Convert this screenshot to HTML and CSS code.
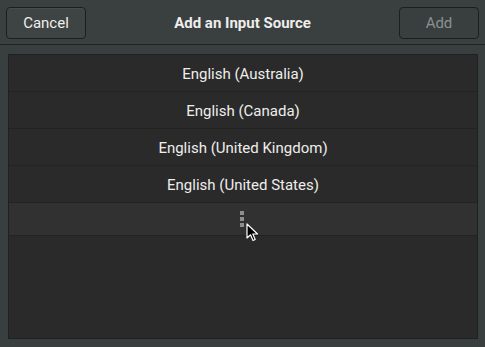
FILE: index.html
```html
<!DOCTYPE html>
<html lang="en">
<head>
    <meta charset="UTF-8">
    <title>Add an Input Source</title>
    <link rel="stylesheet" href="styles.css">
</head>
<body>
    <div class="dialog">
        <!-- Header bar -->
        <header class="headerbar">
            <button class="btn">Cancel</button>
            <h1 class="title">Add an Input Source</h1>
            <button class="btn btn-disabled">Add</button>
        </header>

        <!-- List of sources -->
        <div class="content">
            <ul class="list">
                <li>English (Australia)</li>
                <li>English (Canada)</li>
                <li>English (United Kingdom)</li>
                <li>English (United States)</li>
                <li class="more">
                    <span class="dots"><i></i><i></i><i></i></span>
                    <svg class="cursor" width="14" height="20" viewBox="0 0 14 20">
                        <path d="M1 1 L1 15 L4.5 11.8 L7 17.5 L9.2 16.5 L6.8 11 L11.5 11 Z" fill="#000" stroke="#fff" stroke-width="1.2" stroke-linejoin="round"/>
                    </svg>
                </li>
            </ul>
        </div>
    </div>
</body>
</html>
```

FILE: styles.css
```css
body {
    margin: 0;
    background-color: #393f3f;
    font-family: Roboto, "Noto Sans", sans-serif;
    color: #eeeeec;
}
.dialog {
    width: 485px;
    height: 347px;
    display: flex;
    flex-direction: column;
    background-color: #393f3f;
}
.headerbar {
    height: 44px;
    border-bottom: 1px solid #1f2323;
    background-color: #3a3f3f;
    display: flex;
    align-items: center;
    justify-content: space-between;
    padding: 0 6px;
    box-sizing: content-box;
}
.btn {
    width: 80px;
    height: 32px;
    background-color: #3e4443;
    border: 1px solid #1c1f1f;
    border-radius: 4px;
    color: #eeeeec;
    font-family: Roboto, "Noto Sans", sans-serif;
    font-size: 15px;
    box-shadow: inset 0 1px 0 rgba(255, 255, 255, 0.05);
    margin-top: 1px;
}
.btn-disabled {
    background-color: #393f3f;
    color: #8c9090;
    box-shadow: none;
}
.title {
    margin: 0;
    padding-top: 2px;
    font-size: 15px;
    font-weight: bold;
    color: #eeeeec;
}
.content {
    flex: 1;
    padding: 9px 7px 8px 8px;
}
.list {
    list-style: none;
    margin: 0;
    padding: 0;
    height: 285px;
    background-color: #2a2a2a;
    border: 1px solid #1e2121;
    box-sizing: border-box;
}
.list li {
    height: 36px;
    padding-top: 1px;
    box-sizing: border-box;
    height: 37px;
    border-bottom: 1px solid #232323;
    display: flex;
    align-items: center;
    justify-content: center;
    font-size: 15px;
    color: #eeeeec;
}
.list li.more {
    height: 33px;
    padding-top: 0;
    background-color: #313131;
    position: relative;
}
.dots {
    display: flex;
    flex-direction: column;
    gap: 2px;
    margin-left: -2px;
}
.dots i {
    width: 4px;
    height: 4px;
    background-color: #8e8e8e;
}
.cursor {
    position: absolute;
    left: 237px;
    top: 20px;
}
```
